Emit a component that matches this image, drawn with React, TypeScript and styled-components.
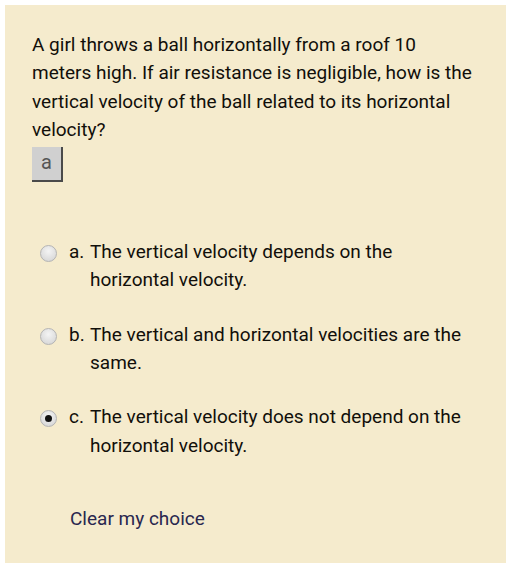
import React, { useState } from 'react'
import styled, { createGlobalStyle } from 'styled-components'

const GlobalStyle = createGlobalStyle`
  html, body {
    margin: 0;
    padding: 0;
    background: #ffffff;
  }
  body {
    font-family: Roboto, "Liberation Sans", Arial, sans-serif;
  }
`

const Panel = styled.div`
  box-sizing: border-box;
  margin: 5px;
  width: 501px;
  height: 558px;
  padding: 26px 32px 0 27px;
  background: #f5ebcd;
  color: #110f0a;
`

const QuestionText = styled.p`
  margin: 0 -4px 0 0;
  font-size: 19px;
  line-height: 28.3px;
`

const HintButton = styled.button`
  box-sizing: border-box;
  display: block;
  width: 31px;
  height: 35px;
  margin-top: 3px;
  padding: 0 0 3px 0;
  background: #d0d0d0;
  border: none;
  border-right: 2px solid #4a4a4a;
  border-bottom: 2px solid #4a4a4a;
  color: #555;
  font-family: Roboto, "Liberation Sans", Arial, sans-serif;
  font-size: 20px;
`

const Options = styled.div`
  display: flex;
  flex-direction: column;
  gap: 26px;
  margin-top: 56px;
  padding-left: 8px;
`

const OptionRow = styled.label`
  display: flex;
  align-items: flex-start;
  font-size: 19px;
  line-height: 28.3px;
  cursor: pointer;
`

const Radio = styled.span<{ $checked: boolean }>`
  flex: none;
  box-sizing: border-box;
  width: 17px;
  height: 17px;
  margin-top: 7px;
  margin-right: 12px;
  border-radius: 50%;
  border: 1px solid #b4b4b4;
  background: radial-gradient(circle at 50% 35%, #f4f4f4 0%, #dcdcdc 70%, #cfcfcf 100%);
  display: flex;
  align-items: center;
  justify-content: center;

  &::after {
    content: '';
    display: ${(p) => (p.$checked ? 'block' : 'none')};
    width: 7px;
    height: 7px;
    border-radius: 50%;
    background: #111;
  }
`

const Letter = styled.span`
  flex: none;
  width: 21px;
`

const OptionText = styled.span`
  flex: 1;
`

const ClearLink = styled.a`
  display: inline-block;
  margin-top: 47px;
  margin-left: 38px;
  font-size: 19px;
  color: #29274f;
  text-decoration: none;
  cursor: pointer;
`

const answers = [
  { key: 'a', text: 'The vertical velocity depends on the horizontal velocity.' },
  { key: 'b', text: 'The vertical and horizontal velocities are the same.' },
  { key: 'c', text: 'The vertical velocity does not depend on the horizontal velocity.' },
]

export default function App() {
  const [choice, setChoice] = useState<string | null>('c')

  return (
    <>
      <GlobalStyle />
      <Panel>
        <QuestionText>
          A girl throws a ball horizontally from a roof 10 meters high. If air resistance is negligible, how is the
          vertical velocity of the ball related to its horizontal velocity?
        </QuestionText>
        <HintButton type="button">a</HintButton>
        <Options>
          {answers.map(({ key, text }) => (
            <OptionRow key={key} onClick={() => setChoice(key)}>
              <Radio $checked={choice === key} />
              <Letter>{key}.</Letter>
              <OptionText>{text}</OptionText>
            </OptionRow>
          ))}
        </Options>
        <ClearLink onClick={() => setChoice(null)}>Clear my choice</ClearLink>
      </Panel>
    </>
  )
}
